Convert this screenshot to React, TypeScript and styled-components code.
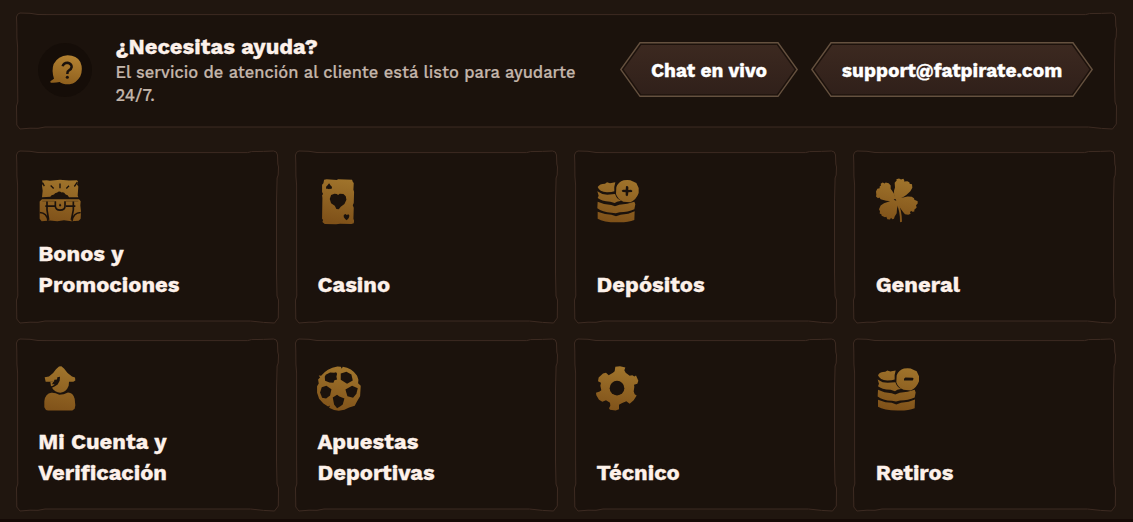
import React from 'react';
import styled, { createGlobalStyle } from 'styled-components';

const INK = '#1b120c';

const GlobalStyle = createGlobalStyle`
  * {
    box-sizing: border-box;
  }

  body {
    margin: 0;
    background: #20160f;
    font-family: 'Work Sans', Inter, 'Liberation Sans', sans-serif;
  }
`;

const Page = styled.main`
  display: flex;
  flex-direction: column;
  gap: 22px;
  width: 1133px;
  height: 522px;
  padding: 12.5px 16.5px 0 16px;
  overflow: hidden;
  border-bottom: 3px solid #150a06;
`;

const Framed = styled.div`
  position: relative;
  display: flex;
`;

const FrameSvg = styled.svg`
  position: absolute;
  inset: 0;
  z-index: -1;
  overflow: visible;
`;

const HelpPanel = styled(Framed)`
  flex: none;
  align-items: center;
  height: 116px;
  padding: 0 23.5px 2px 22px;
`;

const HelpIcon = styled.div`
  display: flex;
  flex: none;
  align-items: center;
  justify-content: center;
  width: 54px;
  height: 54px;
  padding-left: 1px;
  border-radius: 50%;
  background: #150d08;
`;

const HelpText = styled.div`
  flex: 1;
  padding-left: 23.5px;
`;

const HelpTitle = styled.h2`
  margin: 0;
  color: #fdf1ea;
  font-size: 22px;
  font-weight: 700;
  line-height: 26px;
  -webkit-text-stroke: 0.3px #fdf1ea;
`;

const HelpLine = styled.p`
  margin: 1px 0 -1px;
  color: #c3b5aa;
  font-size: 16.5px;
  font-weight: 500;
  line-height: 23px;
  -webkit-text-stroke: 0.2px #c3b5aa;

  span {
    display: block;
    white-space: nowrap;
  }
`;

const Actions = styled.div`
  display: flex;
  gap: 13px;
`;

const HexButton = styled.button<{ $width: number }>`
  position: relative;
  z-index: 0;
  display: flex;
  align-items: center;
  justify-content: center;
  width: ${({ $width }) => $width}px;
  height: 55px;
  padding: 2px 0 0;
  border: 0;
  background: none;
  color: #fff;
  font-family: inherit;
  font-size: 19.2px;
  font-weight: 700;
  white-space: nowrap;
  cursor: pointer;
  -webkit-text-stroke: 0.3px #fff;
`;

const Grid = styled.section`
  display: grid;
  grid-template-columns: repeat(4, 1fr);
  grid-auto-rows: 172px;
  gap: 16px;
`;

const Card = styled(Framed)`
  flex-direction: column;
  justify-content: space-between;
  align-items: flex-start;
  padding: 28px 21.5px 23px 22.3px;
`;

const CardTitle = styled.h3`
  margin: 0;
  color: #fdf1ea;
  font-size: 22px;
  font-weight: 700;
  line-height: 31px;
  -webkit-text-stroke: 0.3px #fdf1ea;

  span {
    display: block;
    white-space: nowrap;
  }
`;

const Frame: React.FC<{ w: number; h: number }> = ({ w, h }) => (
  <FrameSvg width={w} height={h} fill={INK} stroke="#3d2b22" strokeWidth="1">
    <path
      d={`M.5 4 Q1 .5 4 0 L14 .3 22 1.5 30 1.6 H${w - 31} L${w - 27} .6 ${w - 15} .4 ${w - 5} 0
        Q${w - 1.5} 0 ${w - 1} 4 L${w - 0.7} 13 ${w} 16 ${w - 0.3} 24 ${w - 1.4} 27 ${w - 2} 50
        V${h - 50} L${w - 1.5} ${h - 27} ${w} ${h - 23} ${w - 0.2} ${h - 5} ${w - 4} ${h}
        ${w - 15} ${h - 0.6} ${w - 28} ${h - 2} H29 L22 ${h - 0.7} 14 ${h - 0.8} 4 ${h}
        .8 ${h - 4} .5 ${h - 23} 1.8 ${h - 27} 1.6 ${h - 50} V34 L.9 25 .8 12Z`}
    />
  </FrameSvg>
);

const Hex: React.FC<{ w: number }> = ({ w }) => (
  <FrameSvg width={w} height="55">
    <defs>
      <linearGradient id="hex" x1="0" y1="0" x2="0" y2="1">
        <stop offset="0" stopColor="#3c2920" />
        <stop offset="1" stopColor="#30201a" />
      </linearGradient>
    </defs>
    <path d={`M20 .8H${w - 20}L${w - 0.8} 27.5 ${w - 20} 54.3H20L.8 27.5Z`} fill="#1d120c" stroke="#65513f" strokeWidth="1.4" />
    <path d={`M21.2 3H${w - 21.2}L${w - 3.6} 27.5 ${w - 21.2} 52.2H21.2L3.6 27.5Z`} fill="url(#hex)" />
  </FrameSvg>
);

const Gold = () => (
  <defs>
    <linearGradient id="gold" gradientUnits="userSpaceOnUse" x1="115" y1="35" x2="90" y2="172">
      <stop offset="0" stopColor="#a1752c" />
      <stop offset="1" stopColor="#7f5119" />
    </linearGradient>
    <linearGradient id="bubble" x1="0.6" y1="0" x2="0.4" y2="1">
      <stop offset="0" stopColor="#b38232" />
      <stop offset="1" stopColor="#8e5f1d" />
    </linearGradient>
  </defs>
);

const Chest = () => (
  <>
    <path d="M51 45 65 44 75 46 105 43 132 45 156 44 159 49 156 57 160 63 158 90 160 95H132Q129 88 122 87 116 78 110 81 102 74 96 82 91 80 87 87 78 88 76 94L51 95 53 76 51 61 54 54Z" />
    <g fill="none" stroke={INK} strokeWidth="4">
      <path d="M105 54V68M77 60 86 69M132 61 124 69M53 52 58 62M157 50 148 63" />
    </g>
    <path d="M51 101H162L167 107 166 120 168 137 167 160 161 166 139 167 117 164 97 167 75 165 50 167 44 160V108Z" />
    <g fill="none" stroke={INK} strokeWidth="5">
      <path d="M66 108V133L71 163M145 108V133L139 163M61 122H89M123 122H151M44 141Q66 142 69 166M167 141Q145 142 141 166M91 107V122Q92 134 105 134 120 133 120 122V107" />
      <path d="M52 107H88M123 107H160" strokeWidth="1" />
    </g>
    <path d="M102 119 105 114 109 119 105 124Z" fill={INK} />
  </>
);

const PlayingCard = () => (
  <>
    <path d="M58 43 66 42 96 44 100 42 142 43 144 49 147 53 146 73 148 79 147 113 144 120 147 127 146 160 148 166 147 174 140 176 106 175 94 177 60 176 53 170 55 164 52 160 53 98 52 90 55 86 52 80V58L56 54Z" />
    <g fill={INK}>
      <path d="M100 89 105 85 116 86 123 93 125 103 119 116 108 124 102 132 95 131 90 121 79 114 75 101 79 89 89 85 96 86Z" />
      <path d="M73 54 77 60 82 65 80 71 75 70 73 72 69 70 64 70 64 64 69 59Z" />
      <path d="M117 149 122 146 126 149 131 147 134 151 132 158 126 165 121 161 117 155Z" />
    </g>
  </>
);

const Coins: React.FC<{ minus?: boolean }> = ({ minus = false }) => (
  <>
    <path d="M39 65Q45 55 61 55L67 51 76 54 92 51Q87 66 89 78L80 80 67 81Q44 79 39 65Z" />
    <path d="M38 78 53 86 68 88 91 86Q97 103 110 106L97 109 90 113 77 109Q49 107 39 98L42 91Z" />
    <path d="M39 109 58 116 80 119 91 123 104 118 128 115 149 109 152 117 149 132Q130 141 105 141L93 144 81 142Q53 141 38 129Z" />
    <path d="M39 139 61 146 80 148 94 153 108 148 131 145 150 138 149 164Q131 171 105 171 57 172 39 160Z" />
    <path d="M128 44 137 45 150 51 155 53 162 68V83Q155 103 137 111L116 109Q99 102 94 86L95 66Q101 49 117 45Z" />
    <path
      d={minus ? 'M117 76 121 72 143 73 146 76 143 81H117Z' : 'M124 63 128 62 131 65V74L139 73 143 76 142 80 131 81 130 90 127 93 123 90V81L114 80 111 76 115 73H123Z'}
      fill={INK}
    />
  </>
);

const Clover = () => (
  <>
    <path d="M108 98Q103 81 93 70V60L87 53 78 51 75 54 69 51 63 55 64 60 60 63V68L53 70 49 78 50 88 49 93 55 98 59 96 63 101Q79 107 97 107Z" />
    <path d="M106 100Q102 87 103 76L106 66 105 52 111 45 110 41 118 39 124 42 131 40 134 45 133 48 143 47 149 50 150 55 157 56 158 67 152 77Q141 88 132 94L114 103Z" />
    <path d="M101 102 114 108Q117 117 112 130L111 143 105 153 103 160 98 161 94 157 91 162 83 161 80 154 76 155 66 151 65 146 60 144 61 137 58 131 63 120 73 113 88 108Z" />
    <path d="M106 97Q129 98 144 93L156 94 163 98 164 103 174 107 174 114 169 119 171 126 164 133 164 138 158 139 154 136 151 141 153 145 146 148 136 146Q125 135 112 111Z" />
    <path d="M114 105Q127 137 127 169L121 170Q122 139 109 109Z" />
  </>
);

const Pirate = () => (
  <>
    <path d="M59 65 72 63Q86 53 93 41L102 33 109 32 117 39Q128 56 141 63L150 66 151 75 145 79H132L131 91Q124 110 106 112 89 110 81 97L90 92 98 87 104 76 105 64 97 65 96 72 88 73 87 79H62Z" />
    <path d="M76 79H85L81 86H89L84 91 78 92Z" />
    <path d="M58 155V137Q61 114 79 112 90 111 103 118 116 118 129 111 144 111 149 130L151 149 149 160 142 165H69Q61 164 58 155Z" />
  </>
);

const Ball = () => (
  <>
    <path d="M40 72 46 66 42 60 49 61Q66 39 98 33L108 34 111 40 114 34Q141 37 157 61L161 73 160 83 168 91 166 122 157 137 150 151 133 156 119 163Q94 170 73 157L76 150 70 153 56 144 43 130 37 112 37 92 42 84Z" />
    <g fill={INK}>
      <path d="M63 58 76 51 88 52 94 50 97 55 95 64 97 72 89 74 86 82 74 81 61 76 60 64Z" />
      <path d="M108 54 125 49 140 57 144 75 127 85 108 73Z" />
      <path d="M51 95 65 91 80 101 76 120 64 129 52 127 46 111Z" />
      <path d="M122 102 142 91 159 98 155 115 145 127 128 122Z" />
      <path d="M84 126 97 118 104 123 119 129 114 147 107 152 97 158 88 147Z" />
    </g>
  </>
);

const Gear = () => (
  <>
    <path d="M92 34 106 32 122 36 119 44 123 52 135 61 143 59 149 63 154 60 161 76 158 85 148 88 149 94 147 108 150 116 156 120 147 134 135 145 125 137 111 143 103 148 103 161 93 165 76 163 73 158 77 151 76 142 64 134 53 139 43 133 35 119 34 112 45 108 50 104 47 91 49 82 40 77 42 66 55 54 64 52 72 59 85 52 90 47Z" />
    <circle cx="97" cy="98" r="22" fill={INK} />
  </>
);

interface Topic {
  lines: string[];
  viewBox: string;
  icon: React.ReactNode;
}

const topics: Topic[] = [
  { lines: ['Bonos y', 'Promociones'], viewBox: '39 40.5 132 132', icon: <Chest /> },
  { lines: ['Casino'], viewBox: '36.75 41 132 132', icon: <PlayingCard /> },
  { lines: ['Depósitos'], viewBox: '37 41 132 132', icon: <Coins /> },
  { lines: ['General'], viewBox: '49 40.5 132 132', icon: <Clover /> },
  { lines: ['Mi Cuenta y', 'Verificación'], viewBox: '39 34.5 132 132', icon: <Pirate /> },
  { lines: ['Apuestas', 'Deportivas'], viewBox: '36.75 34.5 132 132', icon: <Ball /> },
  { lines: ['Técnico'], viewBox: '37 34.5 132 132', icon: <Gear /> },
  { lines: ['Retiros'], viewBox: '33 40.5 132 132', icon: <Coins minus /> },
];

const Icon = styled.svg`
  display: block;
  overflow: visible;
  fill: url(#gold);
`;

const App: React.FC = () => {
  return (
    <>
      <GlobalStyle />
      <Page>
        <HelpPanel>
          <Frame w={1100.5} h={116} />
          <HelpIcon>
            <Icon width="32" height="30" viewBox="150 164 96 90">
              <Gold />
              <path
                d="M203 165Q230 165 241 185 250 206 241 228 229 249 209 252 188 253 179 245 166 248 152 247L151 243 162 235Q154 210 161 191 174 167 203 165Z"
                fill="url(#bubble)"
              />
              <path d="M188 198Q190 187 203 187 215 190 215 200 214 207 206 211 202 213 202 221" fill="none" stroke={INK} strokeWidth="7.5" />
              <circle cx="202" cy="231" r="4.6" fill={INK} />
            </Icon>
          </HelpIcon>
          <HelpText>
            <HelpTitle>¿Necesitas ayuda?</HelpTitle>
            <HelpLine>
              <span>El servicio de atención al cliente está listo para ayudarte</span>
              <span>24/7.</span>
            </HelpLine>
          </HelpText>
          <Actions>
            <HexButton $width={178}>
              <Hex w={178} />
              Chat en vivo
            </HexButton>
            <HexButton $width={282}>
              <Hex w={282} />
              support@fatpirate.com
            </HexButton>
          </Actions>
        </HelpPanel>
        <Grid>
          {topics.map((topic) => (
            <Card key={topic.lines[0]}>
              <Frame w={262.5} h={172} />
              <Icon width="44" height="44" viewBox={topic.viewBox}>
                {topic.icon}
              </Icon>
              <CardTitle>
                {topic.lines.map((text) => (
                  <span key={text}>{text}</span>
                ))}
              </CardTitle>
            </Card>
          ))}
        </Grid>
      </Page>
    </>
  );
};

export default App;
